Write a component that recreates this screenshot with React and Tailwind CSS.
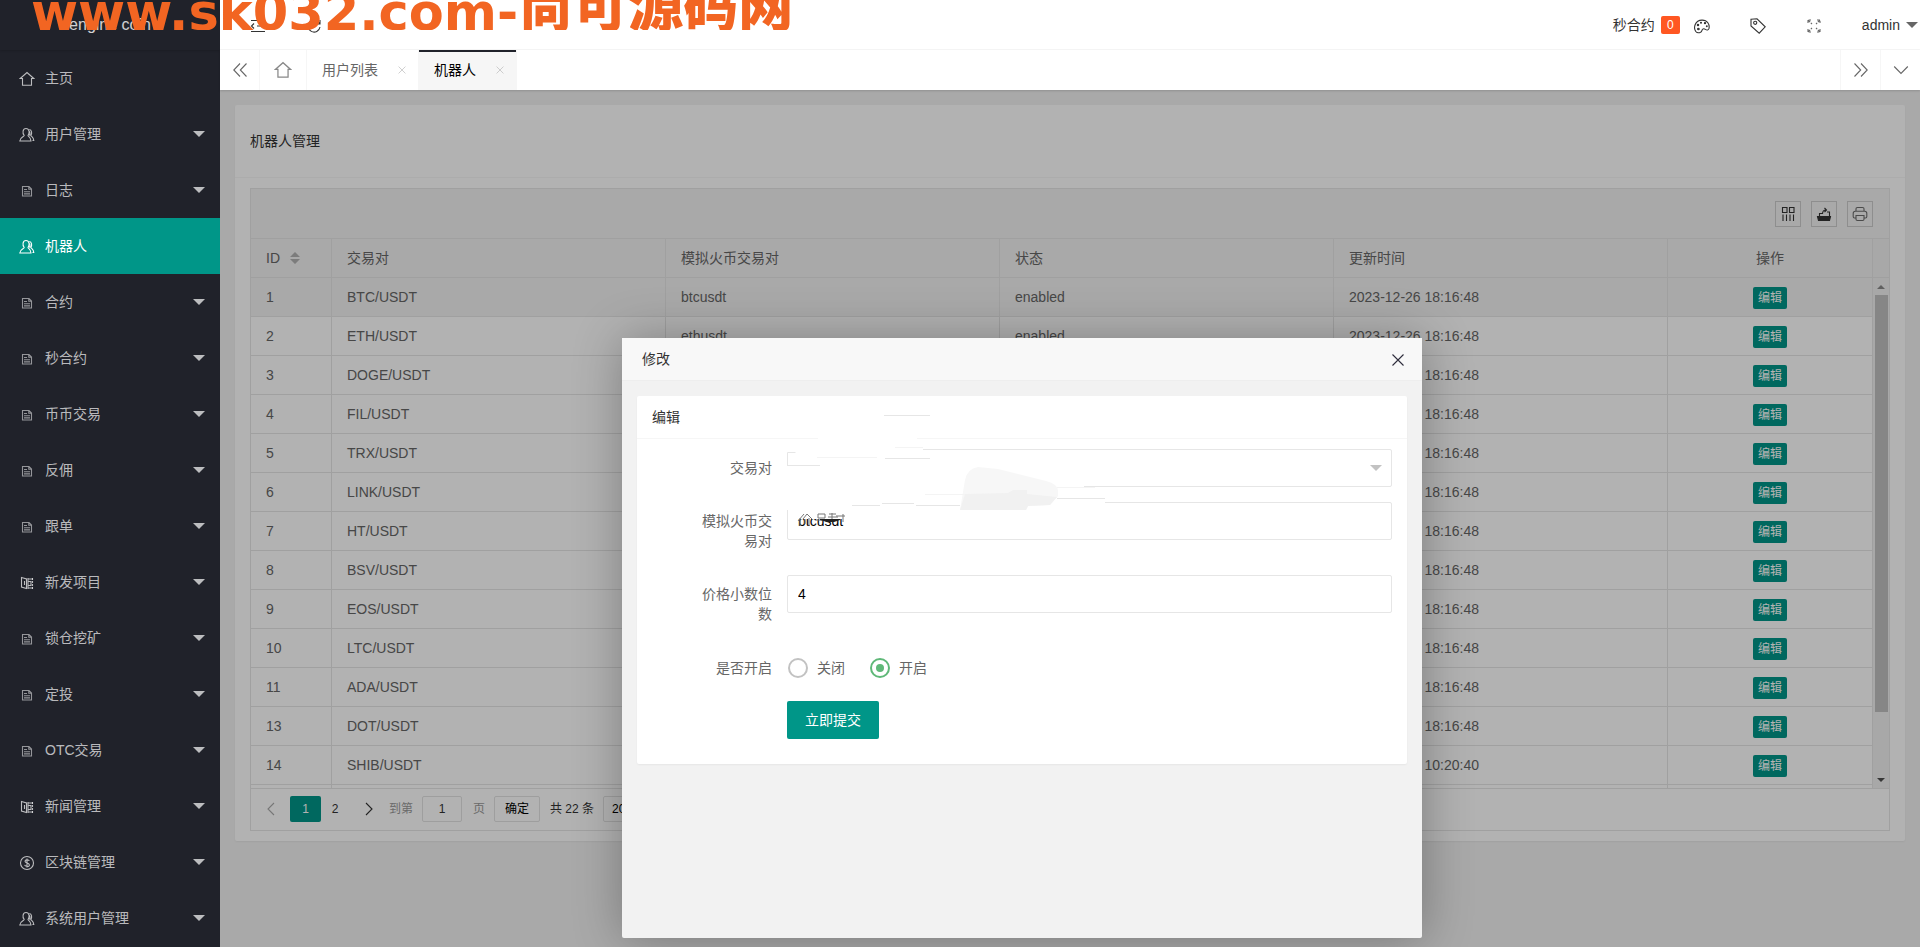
import React, { useState } from 'react';
import clsx from 'clsx';

const menu = [
  { label: '主页', icon: 'home' },
  { label: '用户管理', icon: 'user', sub: true },
  { label: '日志', icon: 'file', sub: true },
  { label: '机器人', icon: 'user', active: true },
  { label: '合约', icon: 'file', sub: true },
  { label: '秒合约', icon: 'file', sub: true },
  { label: '币币交易', icon: 'file', sub: true },
  { label: '反佣', icon: 'file', sub: true },
  { label: '跟单', icon: 'file', sub: true },
  { label: '新发项目', icon: 'book', sub: true },
  { label: '锁仓挖矿', icon: 'file', sub: true },
  { label: '定投', icon: 'file', sub: true },
  { label: 'OTC交易', icon: 'file', sub: true },
  { label: '新闻管理', icon: 'book', sub: true },
  { label: '区块链管理', icon: 'dollar', sub: true },
  { label: '系统用户管理', icon: 'user', sub: true },
];

const robots = [
  [1, 'BTC'], [2, 'ETH'], [3, 'DOGE'], [4, 'FIL'], [5, 'TRX'], [6, 'LINK'], [7, 'HT'],
  [8, 'BSV'], [9, 'EOS'], [10, 'LTC'], [11, 'ADA'], [13, 'DOT'], [14, 'SHIB'],
].map(([id, coin]) => ({
  id,
  pair: `${coin}/USDT`,
  symbol: `${coin.toLowerCase()}usdt`,
  status: 'enabled',
  updated: id === 14 ? '2023-12-26 10:20:40' : '2023-12-26 18:16:48',
}));

function Icon({ name, className }) {
  const shapes = {
    home: <path d="M3.5 7.5H1.2L8 1.5l6.8 6H12.5v6.8h-9z" />,
    user: (
      <>
        <path d="M5.200 8.500C3.200 6 3.600 1.500 7 1.500s4 4.500 2 7c.2 1.300 2.800 1.500 3 5.500H.8c.2-4 4.200-4.200 4.400-5.500z" />
        <path d="M10.300 2.500c2.500.3 3 4 1.500 5.800.3 1.200 2.800 1.600 3 5.200h-1.300M10.300 4.500c1.200 1.200.8 3.200 0 4" />
      </>
    ),
    file: (
      <path d="M3.500 3.500h6.500l2.500 2.500v7h-9zM9.800 3.500v2.700h2.700M5 6.500h3M5 8.700h6M5 10.900h6" opacity=".75" />
    ),
    book: (
      <>
        <path d="M2.500 2.500l5 1.500v9.500l-5-1.500zM5.500 6v4" />
        <path d="M9 3v11M9.500 4h4.500M9.500 6.500h2.500v4H9.500M9.500 13h4.500" />
        <path d="M13.500 3v11" strokeDasharray="2 1" />
      </>
    ),
    dollar: (
      <>
        <circle cx="8" cy="8" r="6.500" />
        <path d="M10.300 6C10 4.600 6 4.300 6 6.300S10.400 7.800 10.400 10 6 11.600 5.600 9.900M8 3.600v9" />
      </>
    ),
    shrink: <path d="M1 2.500h14M7 8h8M1 13.500h14M4 5.500L1.500 8 4 10.500" />,
    refresh: <path d="M13.500 5.500A6 6 0 1 0 14 9M14 2v4h-4" />,
    palette: (
      <>
        <path d="M1.800 13.500C-.8 10 .8 2.300 8 2.100c5.500-.1 7.800 4.500 7 8.400-.4 1.800-2.300 1.800-3.600.9-2-1.300-3.200-.3-3.400.9-.4 2.300-4.200 3.600-6.200 1.200z" />
        <circle cx="4" cy="7" r=".7" fill="currentColor" />
        <circle cx="7" cy="4.700" r=".5" />
        <circle cx="11" cy="5.200" r=".6" fill="currentColor" />
        <circle cx="12.800" cy="8.200" r=".4" />
        <circle cx="4.400" cy="11" r=".8" fill="currentColor" />
      </>
    ),
    tag: (
      <>
        <path d="M1 1.200L7 .8l8.200 8-6 6.400L1 8z" />
        <circle cx="5.200" cy="4.800" r="1.600" />
      </>
    ),
    full: (
      <path d="M2 5V2h3M2 2l4 4M11 2h3v3M14 2l-4 4M2 11v3h3M2 14l4-4M14 11v3h-3M14 14l-4-4" strokeDasharray="3 1" />
    ),
    left2: <path d="M8 1.500L1.800 8 8 14.500M14.500 1.500L8.300 8l6.200 6.500" />,
    right2: <path d="M1.500 1.500L7.700 8l-6.200 6.500M8 1.500L14.200 8 8 14.500" />,
    down: <path d="M1.200 4.500L8 11.500l6.800-7" />,
    left: <path d="M11 2L5 8l6 6" />,
    right: <path d="M5 2l6 6-6 6" />,
    close: <path d="M2.500 2.500l11 11M13.500 2.500l-11 11" />,
    cols: <path d="M2.500 1.500h4.500v5H2.500zM9.500 1.500H14v5H9.500zM3 8.500V15M6.500 8.500V15M10 8.500V15M13.500 8.500V15" />,
    exp: (
      <>
        <path d="M1.500 10.500h13l-1 4h-11z" fill="currentColor" />
        <path d="M3.500 10V7.500h3M13.500 10V6H11M6.500 8c0-3 1.500-4 3.500-4M8.500 2l2 2-2 2" />
      </>
    ),
    print: (
      <path d="M4 5V2.800C4 2 4.600 1.500 5.400 1.500h5.200c.8 0 1.400.5 1.400 1.300V5M4 12H2.500C1.700 12 1.200 11.400 1.200 10.600V7.500C1.200 6.200 2 5.200 3.300 5.200h9.400c1.300 0 2.100 1 2.100 2.300v3.100c0 .8-.5 1.400-1.300 1.400H12M4 9.500h8v3.800c0 .8-.6 1.200-1.300 1.200H5.300c-.7 0-1.300-.4-1.300-1.200z" opacity=".7" />
    ),
  };
  return (
    <svg viewBox="0 0 16 16" fill="none" stroke="currentColor" strokeWidth="1.100" className={clsx('shrink-0', className)} aria-hidden="true">
      {shapes[name]}
    </svg>
  );
}

function Caret({ className }) {
  return (
    <svg viewBox="0 0 12 6" className={clsx('shrink-0', className || 'w-3 h-[6px]')} fill="currentColor" aria-hidden="true">
      <path d="M0 0h12L6 6z" />
    </svg>
  );
}

function Sidebar() {
  return (
    <aside className="w-[220px] shrink-0 bg-[#20222a] text-white/70">
      <div className="h-[50px] flex items-center justify-center text-base text-white/80 shadow-[0_1px_2px_rgba(0,0,0,0.15)]">
        engine coin
      </div>
      <nav>
        {menu.map((item) => (
          <a
            key={item.label}
            href="#"
            className={clsx('h-14 flex items-center pl-[19px] pr-[15px]', item.active && 'bg-[#009688] text-white')}
          >
            <Icon name={item.icon} className="w-4 h-4 mt-[2px]" />
            <span className="ml-[10px] flex-1">{item.label}</span>
            {item.sub && <Caret />}
          </a>
        ))}
      </nav>
    </aside>
  );
}

function Header() {
  return (
    <header className="h-[50px] flex items-center justify-between bg-white border-b border-[#f6f6f6] text-[#333] pl-[30px] pr-[2px]">
      <div className="flex items-center gap-10">
        <button type="button" aria-label="侧边伸缩"><Icon name="shrink" className="w-4 h-4 mt-[2px]" /></button>
        <button type="button" aria-label="刷新"><Icon name="refresh" className="w-4 h-4 mt-[2px]" /></button>
      </div>
      <div className="flex items-center">
        <a href="#" className="flex items-center gap-[6px]">
          秒合约
          <span className="w-[19px] h-[18px] rounded-xs bg-[#ff5722] text-white text-xs leading-[18px] text-center">0</span>
        </a>
        <div className="flex items-center gap-10 ml-[14px]">
          <button type="button" aria-label="主题"><Icon name="palette" className="w-4 h-4 mt-[2px]" /></button>
          <button type="button" aria-label="便签"><Icon name="tag" className="w-4 h-4 mt-[2px]" /></button>
          <button type="button" aria-label="全屏"><Icon name="full" className="w-4 h-4 mt-[2px] text-[#666]" /></button>
        </div>
        <a href="#" className="flex items-center gap-[6px] ml-10">
          admin
          <Caret className="w-3 h-[6px] text-[#666]" />
        </a>
      </div>
    </header>
  );
}

function Tabs() {
  const edge = 'w-10 flex items-center justify-center border-[#f6f6f6]';
  return (
    <div className="relative z-10 h-10 flex bg-white text-[#666] shadow-[0_1px_2px_rgba(0,0,0,0.15)]">
      <button type="button" aria-label="向左" className={clsx(edge, 'border-r')}><Icon name="left2" className="w-4 h-4" /></button>
      <a href="#" aria-label="主页" className="w-[47px] flex items-center justify-center border-r border-[#f6f6f6]">
        <Icon name="home" className="w-[18px] h-[18px] text-[#888]" />
      </a>
      <div className="flex items-center pl-[15px] pr-[11px] border-r border-[#f6f6f6]">
        <a href="#">用户列表</a>
        <button type="button" aria-label="关闭 用户列表" className="ml-[19px] text-[#bbb]"><Icon name="close" className="w-[10px] h-[10px]" /></button>
      </div>
      <div className="flex items-center pl-[15px] pr-[11px] border-r border-[#f6f6f6] bg-[#f6f6f6] text-black shadow-[inset_0_2px_0_#20222a]">
        <a href="#">机器人</a>
        <button type="button" aria-label="关闭 机器人" className="ml-[19px] text-[#bbb]"><Icon name="close" className="w-[10px] h-[10px]" /></button>
      </div>
      <div className="flex-1" />
      <button type="button" aria-label="向右" className={clsx(edge, 'border-l')}><Icon name="right2" className="w-4 h-4" /></button>
      <button type="button" aria-label="更多" className={clsx(edge, 'border-l')}><Icon name="down" className="w-4 h-4" /></button>
    </div>
  );
}

function RobotTable() {
  const cell = 'h-[39px] px-[15px] border-r border-b border-[#e6e6e6] font-normal';
  return (
    <div className="border border-[#e6e6e6] text-[#666]">
      <div className="h-[50px] flex items-center justify-end gap-[10px] pt-px pr-4 bg-[#f2f2f2] border-b border-[#e6e6e6] text-[#333]">
        {[['cols', '筛选列'], ['exp', '导出'], ['print', '打印']].map(([icon, title]) => (
          <button key={icon} type="button" title={title} className="w-[26px] h-[26px] flex items-center justify-center border border-[#ccc]">
            <Icon name={icon} className="w-4 h-4" />
          </button>
        ))}
      </div>

      <div className="flex h-[549px] overflow-hidden">
        <div className="flex-1">
          <table className="w-full table-fixed border-separate border-spacing-0 text-left">
            <colgroup>
              <col className="w-[81px]" />
              <col />
              <col />
              <col />
              <col />
              <col className="w-[205px]" />
            </colgroup>
            <thead className="bg-[#f2f2f2]">
              <tr>
                <th className={cell}>
                  <span className="flex items-center gap-[10px]">
                    ID
                    <svg viewBox="0 0 10 12" className="w-[10px] h-3" fill="#b2b2b2" aria-hidden="true">
                      <path d="M0 5h10L5 0zM0 7h10l-5 5z" />
                    </svg>
                  </span>
                </th>
                <th className={cell}>交易对</th>
                <th className={cell}>模拟火币交易对</th>
                <th className={cell}>状态</th>
                <th className={cell}>更新时间</th>
                <th className={clsx(cell, 'text-center')}>操作</th>
              </tr>
            </thead>
            <tbody>
              {robots.map((row, i) => (
                <tr key={row.id} className={i === 0 ? 'bg-[#f2f2f2]' : 'bg-white'}>
                  <td className={cell}>{row.id}</td>
                  <td className={cell}>{row.pair}</td>
                  <td className={cell}>{row.symbol}</td>
                  <td className={cell}>{row.status}</td>
                  <td className={cell}>{row.updated}</td>
                  <td className={clsx(cell, 'pt-px')}>
                    <button type="button" className="mx-auto block w-[34px] h-[22px] rounded-xs bg-[#009688] text-white text-xs leading-[22px]">
                      编辑
                    </button>
                  </td>
                </tr>
              ))}
              <tr>
                {[0, 1, 2, 3, 4, 5].map((n) => <td key={n} className={cell} />)}
              </tr>
            </tbody>
          </table>
        </div>
        {/* Scroll track */}
        <div className="w-4 flex flex-col items-center bg-[#f1f1f1]">
          <div className="h-[39px] self-stretch border-b border-[#e6e6e6]" />
          <div className="h-[17px] flex items-center"><Caret className="w-2 h-1 rotate-180 text-[#8a8a8a]" /></div>
          <div className="w-[13px] h-[417px] bg-[#c1c1c1]" />
          <div className="flex-1" />
          <div className="h-[17px] flex items-center"><Caret className="w-2 h-1 text-[#505050]" /></div>
        </div>
      </div>

      <div className="h-[42px] flex items-center border-t border-[#e6e6e6] pl-[14px] pb-[2px] text-xs text-[#333]">
        <button type="button" aria-label="上一页" className="w-3 text-[#aaa]"><Icon name="left" className="w-4 h-4 -ml-[2px]" /></button>
        <button type="button" className="ml-[13px] w-[31px] h-[26px] rounded-xs bg-[#009688] text-white">1</button>
        <button type="button" className="w-7 h-[26px]">2</button>
        <button type="button" aria-label="下一页" className="ml-3"><Icon name="right" className="w-4 h-4" /></button>
        <label htmlFor="page" className="ml-3 text-[#999]">到第</label>
        <input id="page" defaultValue="1" className="ml-[9px] w-10 h-[26px] border border-[#e2e2e2] rounded-xs text-center" />
        <span className="ml-[11px] text-[#999]">页</span>
        <button type="button" className="ml-[9px] w-[46px] h-[26px] border border-[#e2e2e2] rounded-xs text-black">确定</button>
        <span className="ml-[10px]">共 22 条</span>
        <select aria-label="每页条数" className="ml-[9px] w-[90px] h-[26px] pl-1 border border-[#e2e2e2] rounded-xs text-black">
          <option>20 条/页</option>
        </select>
      </div>
    </div>
  );
}

// scribbled out area over the first two fields
function Scribble() {
  return (
    <svg viewBox="637 396 500 150" className="absolute left-0 top-0 w-[500px] h-[150px] pointer-events-none" fill="none" aria-hidden="true">
      <path d="M818 436h99v5h-99zM784 446h139v26h-139zM784 470h300v17h21v19h-321zM784 500h176v10h-176z" fill="#fff" />
      <path d="M960 510l5-30q2-11 13-13l20 2 48 12q12 3 12 10v5l-8 9-22 1-2 4z" fill="#f7f7f7" />
      <path d="M960 510l5-16 43-1 5-3h14v4l30 3-7 8-22 1-2 4z" fill="#f1f1f1" />
      <path d="M884 415.500h46M787.500 465v-12.500h8M787 465.500h33M885 458.500h45M852 505.500h28M882 503.500h32M916 505.500h44M1057 498.500h48M1095 486.500h11" stroke="#e6e6e6" />
      <path d="M817 457.500h60M895 447.500h28M925 494.500h40M1057 487.500h38" stroke="#f4f4f4" />
      <path d="M797 512h50v7h-50z" fill="#fff" />
      <path d="M798 521l6-7M800 518v8M803 519l4-5 5 5M805 519v5M809 518v8M818 514h7v4h-7zM816 520h10M829 514h7M828 517h10M832 513v8M836 516h9M843 514v8" stroke="#777" />
      <path d="M820 519h20v1l-6 2h-7l-7-2z" fill="#222" />
    </svg>
  );
}

function Field({ id, label, children }) {
  return (
    <div className="flex">
      <label htmlFor={id} className="w-[135px] shrink-0 pl-10 pr-[15px] py-[9px] leading-5 text-right text-[#666]">{label}</label>
      <div className="flex-1">{children}</div>
    </div>
  );
}

function EditDialog() {
  const [enabled, setEnabled] = useState('1');
  const input = 'block w-full h-[38px] px-[10px] border border-[#e6e6e6] rounded-xs bg-white text-black outline-none';
  const radio = 'appearance-none w-5 h-5 rounded-full border-2 border-[#c2c2c2] p-1 bg-clip-content checked:border-[#5fb878] checked:bg-[#5fb878]';

  return (
    <section role="dialog" aria-label="修改" className="absolute left-[402px] top-[248px] w-[800px] h-[600px] rounded-xs bg-[#f2f2f2] shadow-[1px_1px_50px_rgba(0,0,0,0.3)]">
      <div className="h-[43px] flex items-center justify-between pl-5 pr-4 bg-[#f8f8f8] border-b border-[#eee] text-[#333]">
        修改
        <button type="button" aria-label="关闭" className="mt-[2px] text-[#2e2d3c]"><Icon name="close" className="w-4 h-4" /></button>
      </div>
      <div className="relative m-[15px] bg-white rounded-xs shadow-[0_1px_2px_rgba(0,0,0,0.05)]">
        <h2 className="h-[43px] flex items-center px-[15px] border-b border-[#f6f6f6] text-[#333]">编辑</h2>
        <form className="px-[15px] pt-[10px] pb-[25px]" onSubmit={(e) => e.preventDefault()}>
          <div className="mb-[15px]">
            <Field id="pair" label="交易对">
              <div className="relative">
                <select id="pair" className={clsx(input, 'appearance-none')}>
                  <option value="" />
                </select>
                <Caret className="absolute right-[10px] top-4 w-3 h-[6px] text-[#c2c2c2] pointer-events-none" />
              </div>
            </Field>
          </div>
          <div className="mb-[15px]">
            <Field id="symbol" label="模拟火币交易对">
              <input id="symbol" defaultValue="btcusdt" className={input} />
            </Field>
          </div>
          <div className="mb-4">
            <Field id="decimals" label="价格小数位数">
              <input id="decimals" defaultValue="4" className={input} />
            </Field>
          </div>
          <fieldset className="flex items-center mb-[14px] text-[#666]">
            <legend className="float-left w-[135px] pr-[15px] py-[9px] leading-5 text-right">是否开启</legend>
            <label className="flex items-center gap-[9px] ml-px">
              <input type="radio" name="enabled" value="0" checked={enabled === '0'} onChange={(e) => setEnabled(e.target.value)} className={radio} />
              关闭
            </label>
            <label className="flex items-center gap-[9px] ml-[25px]">
              <input type="radio" name="enabled" value="1" checked={enabled === '1'} onChange={(e) => setEnabled(e.target.value)} className={radio} />
              开启
            </label>
          </fieldset>
          <button type="submit" className="block ml-[135px] w-[92px] h-[38px] rounded-xs bg-[#009688] text-white">立即提交</button>
        </form>
        <Scribble />
      </div>
    </section>
  );
}

export default function App() {
  return (
    <div className="relative flex min-h-screen font-['Liberation_Sans','Noto_Sans_CJK_SC',sans-serif] text-sm">
      <Sidebar />
      <div className="flex-1 flex flex-col min-w-0">
        <Header />
        <Tabs />
        <main className="relative flex-1 p-[15px] bg-[#f2f2f2] overflow-hidden">
          <div className="bg-white rounded-xs shadow-[0_1px_2px_rgba(0,0,0,0.05)]">
            <h1 className="h-[73px] flex items-center px-[15px] border-b border-[#f6f6f6] text-[#333]">机器人管理</h1>
            <div className="px-[15px] py-[10px]">
              <RobotTable />
            </div>
          </div>
          <div className="absolute inset-0 bg-black/30" />
          <EditDialog />
        </main>
      </div>

      {/* Site banner */}
      <div className="absolute left-[31px] top-0 z-20 h-[30px] flex overflow-hidden whitespace-nowrap pointer-events-none font-bold text-[#f26522]">
        <span className="font-['DejaVu_Sans',sans-serif] text-[51px] leading-[34px] h-[30px] flex items-end">www.sk032.com-</span>
        <span className="font-['Noto_Sans_CJK_SC',sans-serif] font-black text-[55px] leading-[56px] h-[30px] flex items-end">尚可源码网</span>
      </div>
    </div>
  );
}
